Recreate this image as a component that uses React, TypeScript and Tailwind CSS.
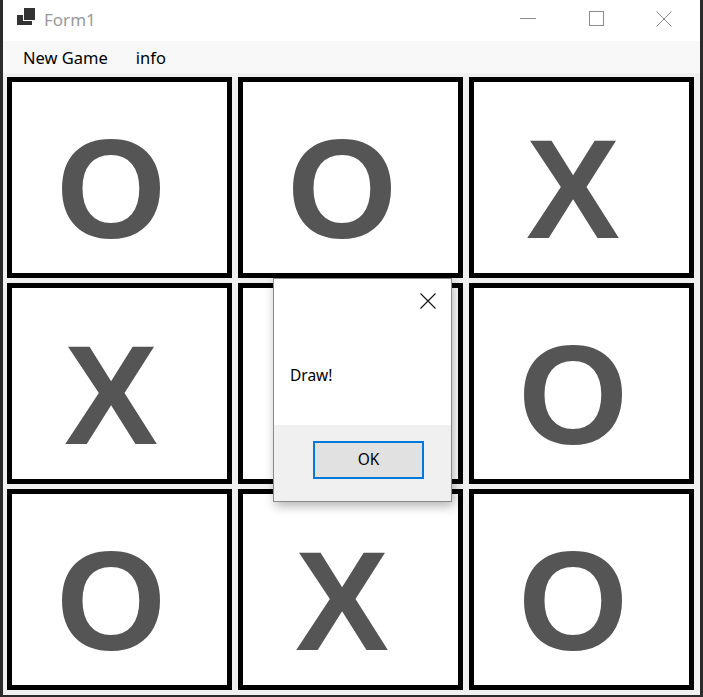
import React from 'react'

const BOARD = ['O', 'O', 'X', 'X', '', 'O', 'O', 'X', 'O']

function AppIcon() {
  return (
    <svg width="20" height="20" viewBox="0 0 20 20" className="block">
      <rect x="1" y="8" width="15" height="10" fill="#333333" />
      <rect x="7" y="0" width="13" height="14" fill="#ffffff" />
      <rect x="8" y="1" width="11" height="12" fill="#333333" />
    </svg>
  )
}

function Cell({ mark }: { mark: string }) {
  return (
    <div className="border-[5px] border-black bg-white flex items-center justify-center overflow-hidden">
      <span
        className="text-[141px] leading-none font-bold text-[#555555] pt-[24px] pr-[17px]"
        style={{ fontFamily: '"Liberation Sans", Arial, sans-serif' }}
      >
        {mark}
      </span>
    </div>
  )
}

export default function App() {
  return (
    <div
      className="relative w-[703px] h-[697px] bg-[#f0f0f0] border-l-[3px] border-r-[3px] border-b-[2px] border-[#2b2b2b] flex flex-col overflow-hidden"
      style={{ fontFamily: '"Segoe UI", "Noto Sans", "Open Sans", sans-serif' }}
    >
      {/* title bar */}
      <div className="h-[41px] bg-white flex items-center shrink-0">
        <div className="pl-[13px] pr-[8px] self-start pt-[7px]">
          <AppIcon />
        </div>
        <span className="text-[17px] text-[#9a9a9a] -mt-[2px]">Form1</span>
        <div className="ml-auto flex items-center h-full">
          <div className="w-[69px] h-full flex items-center justify-center">
            <div className="w-[16px] h-px bg-[#8c8c8c] -mt-[4px]" />
          </div>
          <div className="w-[69px] h-full flex items-center justify-center">
            <div className="w-[15px] h-[15px] border border-[#8c8c8c] -mt-[4px]" />
          </div>
          <div className="w-[69px] h-full flex items-center justify-center">
            <svg width="16" height="16" viewBox="0 0 16 16" className="-mt-[4px] -ml-[4px]">
              <path d="M0.5 0.5 L15.5 15.5 M15.5 0.5 L0.5 15.5" stroke="#8c8c8c" strokeWidth="1" />
            </svg>
          </div>
        </div>
      </div>

      {/* menu bar */}
      <div className="h-[32px] bg-[#f8f8f8] flex items-center text-[16.5px] text-black shrink-0 pl-[13px] pt-[2px]">
        <span className="px-[7px]">New Game</span>
        <span className="px-[7px] ml-[14px]">info</span>
      </div>

      {/* board */}
      <div className="pt-[4px] pl-[4px] grid grid-cols-[225px_225px_225px] grid-rows-[201px_201px_201px] gap-x-[6px] gap-y-[5px]">
        {BOARD.map((m, i) => (
          <Cell key={i} mark={m} />
        ))}
      </div>

      {/* message box */}
      <div className="absolute left-[270px] top-[278px] w-[179px] h-[224px] border border-[#8a8a8a] bg-white flex flex-col shadow-[2px_4px_10px_rgba(0,0,0,0.3)]">
        <div className="flex-1 relative">
          <svg width="16" height="16" viewBox="0 0 16 16" className="absolute left-[146px] top-[14px]">
            <path d="M0.5 0.5 L15.5 15.5 M15.5 0.5 L0.5 15.5" stroke="#111" strokeWidth="1.1" />
          </svg>
          <span className="absolute left-[16px] top-[85px] text-[15.5px] text-black">Draw!</span>
        </div>
        <div className="h-[76px] bg-[#f0f0f0] flex items-start pt-[16px] pl-[39px]">
          <div className="w-[111px] h-[38px] border-2 border-[#0078d7] bg-[#e1e1e1] flex items-center justify-center text-[15.5px] text-black">
            OK
          </div>
        </div>
      </div>
    </div>
  )
}
